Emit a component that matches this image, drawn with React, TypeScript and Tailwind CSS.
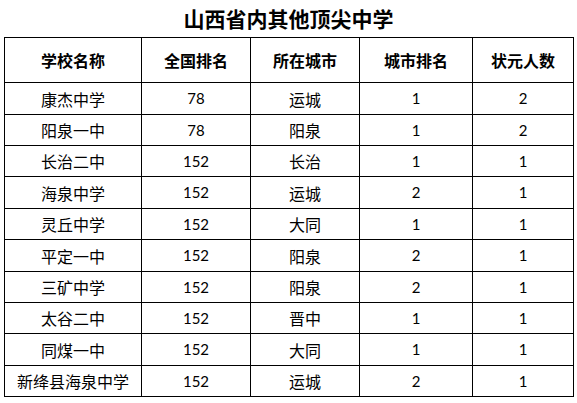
import React from "react";

const rows: [string, string, string, string, string][] = [
  ["康杰中学", "78", "运城", "1", "2"],
  ["阳泉一中", "78", "阳泉", "1", "2"],
  ["长治二中", "152", "长治", "1", "1"],
  ["海泉中学", "152", "运城", "2", "1"],
  ["灵丘中学", "152", "大同", "1", "1"],
  ["平定一中", "152", "阳泉", "2", "1"],
  ["三矿中学", "152", "阳泉", "2", "1"],
  ["太谷二中", "152", "晋中", "1", "1"],
  ["同煤一中", "152", "大同", "1", "1"],
  ["新绛县海泉中学", "152", "运城", "2", "1"],
];

const heights = ["h-[32px]", "h-[31px]", "h-[31px]", "h-[32px]", "h-[31px]", "h-[32px]", "h-[31px]", "h-[31px]", "h-[32px]", "h-[31px]"];

const cjk = "font-['Noto_Sans_CJK_SC',sans-serif]";
const num = "font-['Lato','Noto_Sans_CJK_SC',sans-serif]";

export default function App() {
  return (
    <div className="w-[577px] h-[403px] bg-white text-black">
      <div className={`h-[37px] flex items-center justify-center text-[21px] font-bold ${cjk}`}>
        山西省内其他顶尖中学
      </div>
      <div className="pl-[4px]">
        <table className="border-collapse table-fixed w-[569px]">
          <colgroup>
            <col className="w-[137px]" />
            <col className="w-[109px]" />
            <col className="w-[109px]" />
            <col className="w-[113px]" />
            <col className="w-[101px]" />
          </colgroup>
          <thead>
            <tr className="h-[45px]">
              {["学校名称", "全国排名", "所在城市", "城市排名", "状元人数"].map((h) => (
                <th
                  key={h}
                  className={`border border-black p-0 text-center align-middle text-[16px] leading-none font-bold ${cjk}`}
                >
                  {h}
                </th>
              ))}
            </tr>
          </thead>
          <tbody>
            {rows.map((r, i) => (
              <tr key={i} className={heights[i]}>
                <td className={`border border-black p-0 text-center align-middle text-[16px] leading-none ${cjk}`}>{r[0]}</td>
                <td className={`border border-black p-0 text-center align-middle text-[15px] leading-none ${num}`}>{r[1]}</td>
                <td className={`border border-black p-0 text-center align-middle text-[16px] leading-none ${cjk}`}>{r[2]}</td>
                <td className={`border border-black p-0 text-center align-middle text-[15px] leading-none ${num}`}>{r[3]}</td>
                <td className={`border border-black p-0 text-center align-middle text-[15px] leading-none ${num}`}>{r[4]}</td>
              </tr>
            ))}
          </tbody>
        </table>
      </div>
    </div>
  );
}
